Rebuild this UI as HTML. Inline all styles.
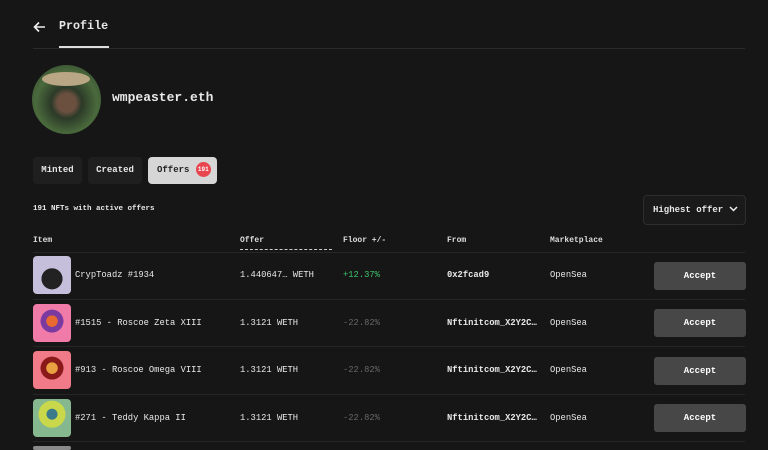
<!DOCTYPE html>
<html style="width:768px;height:450px;overflow:hidden"><head><style>
*{margin:0;padding:0;box-sizing:border-box}
body{width:768px;height:450px;background:#161616;color:#e8e8e8;font-family:"Liberation Mono",monospace;position:relative;overflow:hidden}
.a{position:absolute;white-space:nowrap}
.b{font-weight:bold}
.sep{position:absolute;left:33px;width:712px;height:1px;background:#262626}
.th{font-size:8px;font-weight:bold;top:236px;color:#ddd}
.img{position:absolute;left:33px;width:38px;height:38px;border-radius:4px}
.r{font-size:8.8px}
.btn{position:absolute;left:654px;width:92px;height:28px;background:#474747;border-radius:3px;color:#fff;font-weight:bold;font-size:9px;text-align:center;line-height:28px}
.tab{position:absolute;top:157px;height:27px;border-radius:4px;background:#1f1f1f;font-size:9px;font-weight:bold;line-height:27px;text-align:center}
</style></head><body>
<svg class="a" style="left:33px;top:21px" width="13" height="12" viewBox="0 0 13 12"><path d="M12 6H2M6 1.5L1.5 6 6 10.5" stroke="#eee" stroke-width="1.6" fill="none"/></svg>
<div class="a b" style="left:59px;top:19px;font-size:11.7px">Profile</div>
<div class="a" style="left:33px;top:48px;width:712px;height:1px;background:#2a2a2a"></div>
<div class="a" style="left:59px;top:46px;width:50px;height:2px;background:#ddd"></div>
<div class="a" style="left:32px;top:65px;width:69px;height:69px;border-radius:50%;background:radial-gradient(circle at 50% 55%,#6b5040 0 18%,#2c3a28 30%,#4a6a3c 60%,#2a3a2a 100%)"></div>
<div class="a" style="left:42px;top:72px;width:48px;height:14px;border-radius:50%;background:#b8a684"></div>
<div class="a b" style="left:112px;top:90px;font-size:13px">wmpeaster.eth</div>
<div class="tab" style="left:33px;width:49px">Minted</div>
<div class="tab" style="left:88px;width:54px">Created</div>
<div class="tab" style="left:148px;width:69px;background:#d6d6d6;color:#222;text-align:left;padding-left:9px">Offers <span style="display:inline-block;width:15px;height:15px;border-radius:50%;background:#e8454f;color:#fff;font-size:6px;line-height:15px;text-align:center;vertical-align:middle;margin-left:1px">191</span></div>
<div class="a b" style="left:33px;top:205px;font-size:7.5px">191 NFTs with active offers</div>
<div class="a" style="left:643px;top:195px;width:103px;height:30px;border:1px solid #2e2e2e;border-radius:4px;background:#1a1a1a;font-size:9px;font-weight:bold;line-height:28px;padding-left:9px">Highest offer <svg width="9" height="6" viewBox="0 0 9 6" style="margin-left:0px"><path d="M1 1l3.5 3.5L8 1" stroke="#eee" stroke-width="1.5" fill="none"/></svg></div>
<div class="a th" style="left:33px">Item</div>
<div class="a th" style="left:240px">Offer</div>
<div class="a" style="left:240px;top:249px;width:92px;border-top:1px dashed #ccc"></div>
<div class="a th" style="left:343px">Floor +/-</div>
<div class="a th" style="left:447px">From</div>
<div class="a th" style="left:550px">Marketplace</div>
<div class="sep" style="top:252px"></div>
<div class="sep" style="top:299px"></div>
<div class="sep" style="top:346px"></div>
<div class="sep" style="top:394px"></div>
<div class="sep" style="top:441px"></div>

<div class="img" style="top:256px;background:radial-gradient(circle at 50% 60%,#222 0 35%,#c6bfdc 36%)"></div>
<div class="a r" style="left:75px;top:270px">CrypToadz #1934</div>
<div class="a r" style="left:240px;top:270px">1.440647… WETH</div>
<div class="a r" style="left:343px;top:270px;color:#3fc46a">+12.37%</div>
<div class="a r b" style="left:447px;top:270px">0x2fcad9</div>
<div class="a r" style="left:550px;top:270px">OpenSea</div>
<div class="btn" style="top:262px">Accept</div>

<div class="img" style="top:304px;background:radial-gradient(circle at 50% 45%,#e86a30 0 20%,#7a3aa0 21% 40%,#f07aa8 41%)"></div>
<div class="a r" style="left:75px;top:318px">#1515 - Roscoe Zeta XIII</div>
<div class="a r" style="left:240px;top:318px">1.3121 WETH</div>
<div class="a r" style="left:343px;top:318px;color:#666">-22.82%</div>
<div class="a r b" style="left:447px;top:318px">Nftinitcom_X2Y2C…</div>
<div class="a r" style="left:550px;top:318px">OpenSea</div>
<div class="btn" style="top:309px">Accept</div>

<div class="img" style="top:351px;background:radial-gradient(circle at 50% 45%,#e8a040 0 20%,#8a1a1a 21% 40%,#f07a88 41%)"></div>
<div class="a r" style="left:75px;top:365px">#913 - Roscoe Omega VIII</div>
<div class="a r" style="left:240px;top:365px">1.3121 WETH</div>
<div class="a r" style="left:343px;top:365px;color:#666">-22.82%</div>
<div class="a r b" style="left:447px;top:365px">Nftinitcom_X2Y2C…</div>
<div class="a r" style="left:550px;top:365px">OpenSea</div>
<div class="btn" style="top:357px">Accept</div>

<div class="img" style="top:399px;background:radial-gradient(circle at 50% 40%,#3a7a8a 0 18%,#c8d84a 19% 45%,#86b890 46%)"></div>
<div class="a r" style="left:75px;top:413px">#271 - Teddy Kappa II</div>
<div class="a r" style="left:240px;top:413px">1.3121 WETH</div>
<div class="a r" style="left:343px;top:413px;color:#666">-22.82%</div>
<div class="a r b" style="left:447px;top:413px">Nftinitcom_X2Y2C…</div>
<div class="a r" style="left:550px;top:413px">OpenSea</div>
<div class="btn" style="top:404px">Accept</div>

<div class="img" style="top:446px;height:4px;background:#8a8a8a"></div>
</body></html>
